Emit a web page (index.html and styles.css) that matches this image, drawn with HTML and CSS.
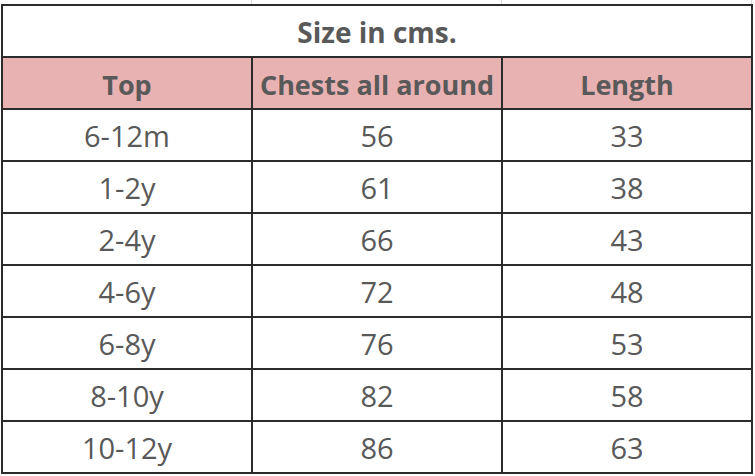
FILE: index.html
```html
<!DOCTYPE html>
<html>
<head>
<meta charset="utf-8">
<link rel="stylesheet" href="styles.css">
</head>
<body>
<div class="strip"><span></span><span></span><span></span></div>
<table class="size-table">
  <tr class="title-row"><td colspan="3">Size in cms.</td></tr>
  <tr class="head-row"><th>Top</th><th>Chests all around</th><th>Length</th></tr>
  <tr><td>6-12m</td><td>56</td><td>33</td></tr>
  <tr><td>1-2y</td><td>61</td><td>38</td></tr>
  <tr><td>2-4y</td><td>66</td><td>43</td></tr>
  <tr><td>4-6y</td><td>72</td><td>48</td></tr>
  <tr><td>6-8y</td><td>76</td><td>53</td></tr>
  <tr><td>8-10y</td><td>82</td><td>58</td></tr>
  <tr><td>10-12y</td><td>86</td><td>63</td></tr>
</table>
</body>
</html>
```
FILE: styles.css
```css
html, body {
  margin: 0;
  padding: 0;
  background: #ffffff;
}
body {
  font-family: "Open Sans", Lato, sans-serif;
  color: #595959;
}
.strip {
  display: flex;
  height: 4px;
  margin-left: 2px;
  width: 750px;
}
.strip span {
  flex: 1;
  border-right: 1px solid #dadada;
}
.size-table {
  border-collapse: collapse;
  margin-left: 1px;
  table-layout: fixed;
  width: 752px;
}
.size-table td, .size-table th {
  border: 2px solid #2b2b2b;
  height: 50px;
  padding: 0;
  text-align: center;
  vertical-align: middle;
  font-size: 29px;
  font-weight: 400;
  line-height: 1;
}
.title-row td {
  font-weight: 700;
  font-size: 28px;
  height: 48px;
  padding-top: 2px;
}
.head-row th {
  background: #e8b1b2;
  font-weight: 700;
  font-size: 27px;
  height: 47px;
  padding-top: 3px;
}
```
